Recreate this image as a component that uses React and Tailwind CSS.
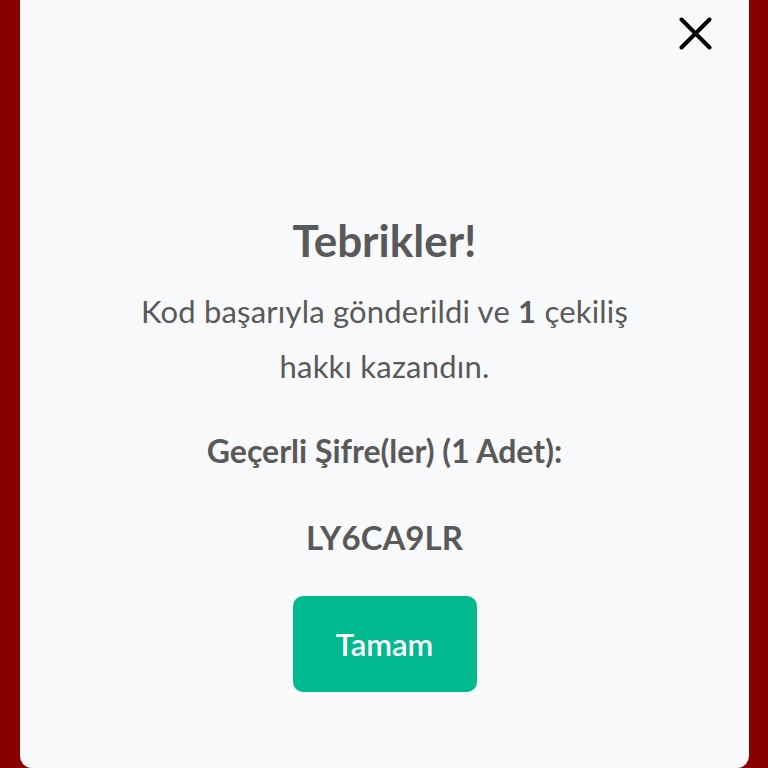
export default function App() {
  return (
    <div className="h-[768px] w-full bg-[#8a0000] flex justify-center overflow-hidden" style={{ fontFamily: "Lato, 'Noto Sans', sans-serif" }}>
      <div className="relative w-[729px] h-[768px] ml-[1px] bg-[#f8f9fb] rounded-b-xl flex flex-col items-center text-[#595959]">
        <button className="absolute left-[659px] top-[17px] text-black">
          <svg width="33" height="33" viewBox="0 0 33 33" fill="none" stroke="currentColor" strokeWidth="4" strokeLinecap="round">
            <path d="M2.5 2.5 L30.5 30.5 M30.5 2.5 L2.5 30.5" />
          </svg>
        </button>

        <h1 className="mt-[214px] text-[44px] leading-[52px] font-bold">Tebrikler!</h1>

        <p className="mt-[18px] text-center text-[31px] leading-[55px] tracking-[0.2px]">
          Kod başarıyla gönderildi ve <strong className="font-bold">1</strong> çekiliş
          <br />
          hakkı kazandın.
        </p>

        <p className="mt-[37px] text-[32px] leading-[40px] font-bold">Geçerli Şifre(ler) (1 Adet):</p>

        <p className="mt-[46px] text-[33px] leading-[40px] font-bold">LY6CA9LR</p>

        <button className="mt-[39px] w-[184px] h-[96px] rounded-[10px] bg-[#00b98e] text-white text-[31px] font-semibold">
          Tamam
        </button>
      </div>
    </div>
  );
}
